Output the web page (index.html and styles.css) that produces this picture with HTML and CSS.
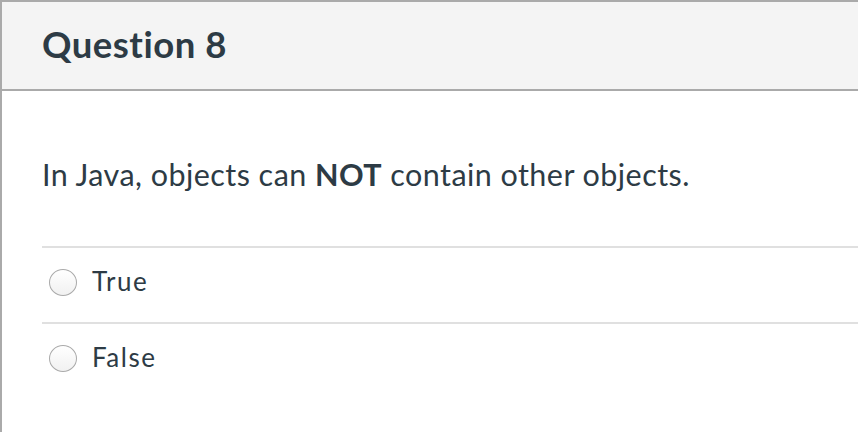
FILE: index.html
```html
<!DOCTYPE html>
<html>
<head>
<meta charset="utf-8">
<link rel="stylesheet" href="styles.css">
</head>
<body>
<div class="quiz">
  <div class="header">
    <h2 class="title">Question 8</h2>
  </div>
  <div class="content">
    <p class="question">In Java, objects can <strong>NOT</strong> contain other objects.</p>
    <div class="answers">
      <label class="answer">
        <span class="radio"></span>
        <span class="label">True</span>
      </label>
      <label class="answer">
        <span class="radio"></span>
        <span class="label">False</span>
      </label>
    </div>
  </div>
</div>
</body>
</html>
```
FILE: styles.css
```css
html, body {
  margin: 0;
  padding: 0;
  background: #fff;
}
body {
  font-family: Lato, "Open Sans", sans-serif;
  font-variant-ligatures: none;
  color: #2d3b45;
  width: 858px;
  height: 432px;
  overflow: hidden;
}
.quiz {
  border-top: 2px solid #aaaaaa;
  border-left: 2px solid #aaaaaa;
  width: 900px;
  height: 432px;
  box-sizing: border-box;
}
.header {
  background: #f4f4f4;
  height: 66px;
  padding-top: 21px;
  padding-left: 40px;
  border-bottom: 2px solid #aaaaaa;
}
.title {
  margin: 0;
  font-size: 36.5px;
  line-height: 42px;
  letter-spacing: 0.5px;
  font-weight: 700;
  color: #2d3b45;
}
.content {
  padding-left: 40px;
}
.question {
  margin: 0;
  padding-top: 65px;
  padding-bottom: 54px;
  font-size: 30.5px;
  line-height: 36px;
  letter-spacing: 0.45px;
  font-weight: 400;
}
.question strong {
  font-weight: 700;
}
.answers {
  display: flex;
  flex-direction: column;
}
.answer {
  display: flex;
  align-items: flex-start;
  height: 56px;
  padding-top: 18px;
  border-top: 2px solid #e0e0e0;
}
.radio {
  width: 28px;
  height: 27px;
  margin-top: 3px;
  border-radius: 50%;
  border: 1px solid #aaaaaa;
  box-sizing: border-box;
  background: linear-gradient(#ffffff, #f1f1f1);
  margin-left: 7px;
  margin-right: 15px;
  flex: none;
}
.label {
  font-size: 26px;
  line-height: 30px;
  letter-spacing: 1.5px;
}
```
